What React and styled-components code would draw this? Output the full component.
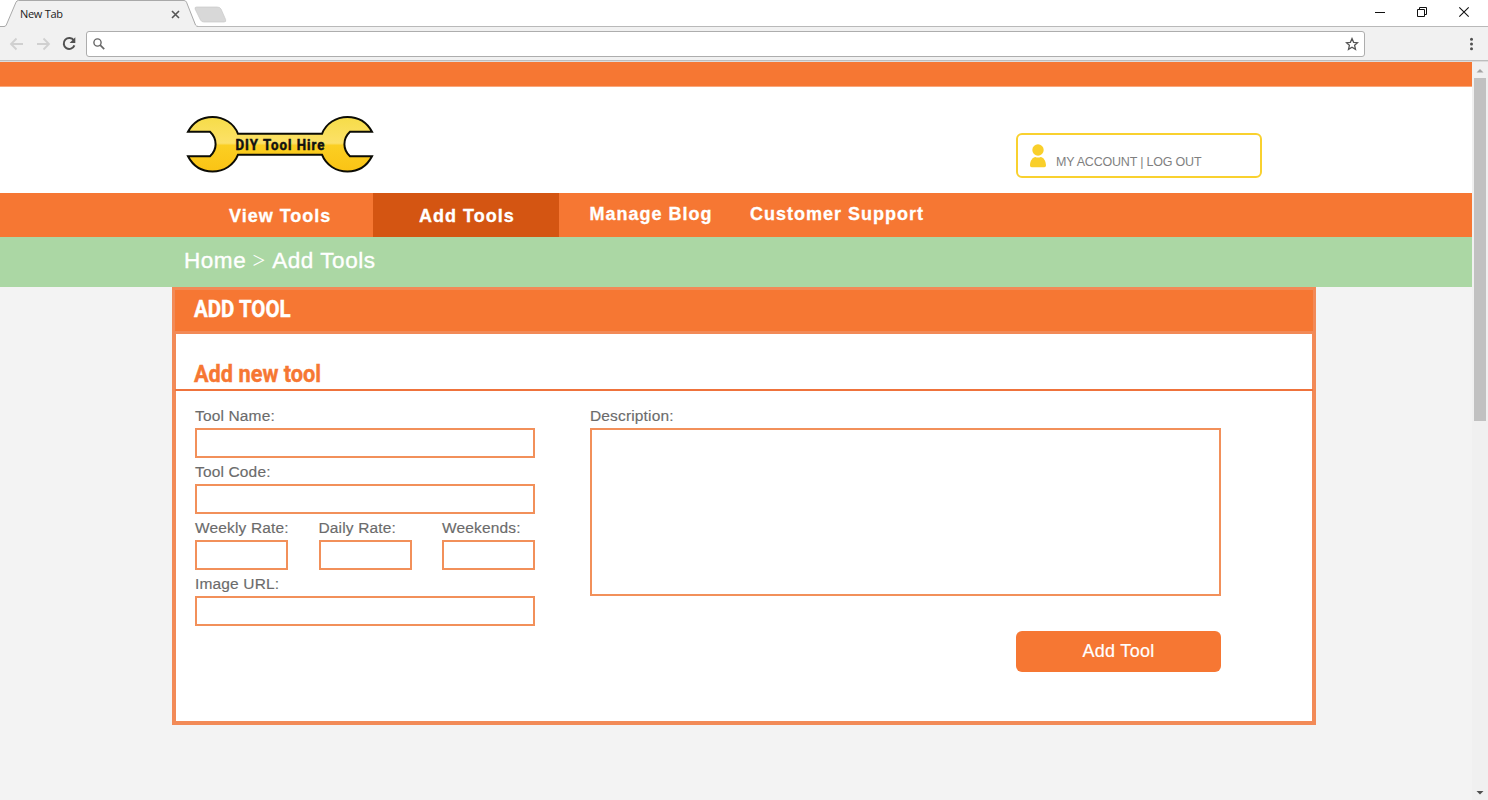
import React from 'react';
import styled, { createGlobalStyle } from 'styled-components';

const ORANGE = '#f67733';
const EDGE = '#f28a57';

const GlobalStyle = createGlobalStyle`
  * { box-sizing: border-box; }
  body { margin: 0; background: #f3f3f3; font-family: 'Liberation Sans', Arial, sans-serif; }
`;

const Window = styled.div`
  width: 1488px;
  height: 800px;
  display: flex;
  flex-direction: column;
  overflow: hidden;
`;

const TabStrip = styled.div`
  height: 27px;
  flex: none;
  display: flex;
  justify-content: space-between;
  background: #fff;
  border-bottom: 1px solid #b9b9b9;
`;

const Tabs = styled.div`
  position: relative;
  width: 240px;
  height: 27px;
  padding: 6px 0 0 20px;
  display: flex;
`;

const TabShape = styled.svg`
  position: absolute;
  left: 0;
  top: 0;
`;

const TabTitle = styled.span`
  position: relative;
  width: 151px;
  font: 11px/16px 'Open Sans', sans-serif;
  letter-spacing: -0.3px;
  color: #222;
`;

const TabClose = styled.svg`
  position: relative;
  margin-top: 4px;
`;

const WindowControls = styled.div`
  display: flex;
  padding: 6px 18px 0 0;
  gap: 30px;
`;

const Toolbar = styled.div`
  height: 35px;
  flex: none;
  display: flex;
  align-items: center;
  padding: 0 8px 1px 9px;
  background: #f1f1f1;
  border-bottom: 1px solid #dcdcdc;
  box-shadow: inset 0 -1px #bdbdbd;
`;

const NavIcons = styled.div`
  width: 77px;
  display: flex;
  gap: 10px;
`;

const AddressBar = styled.div`
  width: 1279px;
  height: 26px;
  padding: 0 5px 0 6px;
  display: flex;
  align-items: center;
  justify-content: space-between;
  background: #fff;
  border: 1px solid #adadad;
  border-radius: 3px;
`;

const MenuDots = styled.svg`
  margin-left: auto;
`;

const Viewport = styled.div`
  flex: 1;
  display: flex;
`;

const Page = styled.main`
  width: 1472px;
`;

const TopStripe = styled.div`
  height: 25px;
  background: ${ORANGE};
  border-bottom: 1px solid #f9a87c;
`;

const Header = styled.header`
  height: 106px;
  display: flex;
  justify-content: space-between;
  padding: 28px 210px 0 186px;
  background: #fff;
`;

const AccountBox = styled.div`
  width: 246px;
  height: 45px;
  margin-top: 18px;
  padding: 9px 0 0 12px;
  display: flex;
  border: 2px solid #f9d12f;
  border-radius: 6px;
`;

const AccountLinks = styled.span`
  margin: 11px 0 0 10px;
  font-size: 12.5px;
  line-height: 15px;
  letter-spacing: -0.2px;
  white-space: nowrap;
  color: #7f7f7f;
`;

const Nav = styled.nav`
  height: 44px;
  display: flex;
  padding-left: 187px;
  background: ${ORANGE};
`;

const NavItem = styled.a`
  width: ${(p) => p.$width}px;
  height: 44px;
  padding-left: ${(p) => p.$inset}px;
  background: ${(p) => (p.$active ? '#d45512' : 'transparent')};
  color: #fff;
  font-weight: bold;
  font-size: 18px;
  line-height: ${(p) => p.$line || 46}px;
  letter-spacing: 1px;
  white-space: nowrap;
  -webkit-text-stroke: 0.3px #fff;
`;

const Breadcrumb = styled.div`
  height: 50px;
  padding-left: 184px;
  background: #abd7a4;
  color: #fff;
  font-size: 22.5px;
  line-height: 47px;
  letter-spacing: 0.55px;
`;

const Crumb = styled.span`
  -webkit-text-stroke: 0.35px #fff;
`;

const Chevron = styled.span`
  display: inline-block;
  width: 26px;
  text-align: center;
  font-family: 'Liberation Serif', serif;
`;

const Panel = styled.section`
  width: 1144px;
  height: 438px;
  margin-left: 172px;
  background: #fff;
  border: 4px solid ${EDGE};
  border-top: 0;
`;

const PanelHeader = styled.h1`
  height: 47px;
  margin: 0 -1px;
  padding-left: 19px;
  background: ${ORANGE};
  border: solid ${EDGE};
  border-width: 3px 0;
  color: #fff;
  font: bold 23px/39px Roboto, sans-serif;
`;

const Squeeze = styled.span`
  display: inline-block;
  transform: scaleX(${(p) => p.$x});
  transform-origin: 0 50%;
  white-space: nowrap;
  -webkit-text-stroke: 0.4px currentColor;
  stroke-linejoin: round;
`;

const SectionTitle = styled.h2`
  height: 57px;
  margin: 0 -1px;
  padding: 28px 0 0 19px;
  border-bottom: 2px solid #ef733c;
  color: ${ORANGE};
  font: bold 23px/26px Roboto, sans-serif;
`;

const Form = styled.form`
  display: flex;
  gap: 55px;
  padding: 15px 0 0 19px;
`;

const Column = styled.div`
  width: ${(p) => p.$width}px;
  display: flex;
  flex-direction: column;
  gap: 4px;
`;

const RateRow = styled.div`
  display: flex;
  justify-content: space-between;
`;

const Field = styled.label`
  width: ${(p) => (p.$narrow ? '93px' : '100%')};
  display: flex;
  flex-direction: column;
  gap: 2px;
  color: #6b6b6b;
  font-size: 15.5px;
  line-height: 20px;
  letter-spacing: 0.15px;
  white-space: nowrap;
  -webkit-text-stroke: 0.15px #6b6b6b;
`;

const Input = styled.input`
  width: 100%;
  height: 30px;
  margin: 0;
  padding: 0 8px;
  border: 2px solid #f2905a;
  border-radius: 0;
  background: #fff;
  outline: 0;
`;

const TextArea = styled.textarea`
  width: 100%;
  height: 168px;
  margin: 0;
  border: 2px solid #f2905a;
  border-radius: 0;
  background: #fff;
  resize: none;
  outline: 0;
`;

const SubmitButton = styled.button`
  width: 205px;
  height: 41px;
  margin: 31px 0 0;
  padding: 0;
  align-self: flex-end;
  border: 0;
  border-radius: 6px;
  background: ${ORANGE};
  color: #fff;
  font: 18px/41px 'Liberation Sans', Arial, sans-serif;
  letter-spacing: 0.3px;
  -webkit-text-stroke: 0.2px #fff;
`;

const ScrollTrack = styled.div`
  width: 16px;
  display: flex;
  flex-direction: column;
  align-items: center;
  background: #f0f0f0;
`;

const ScrollArrow = styled.svg`
  flex: none;
`;

const ScrollThumb = styled.div`
  width: 12px;
  height: 343px;
  margin-bottom: auto;
  background: #c1c1c1;
`;

function Logo() {
  return (
    <svg width="188" height="59" viewBox="186 115 188 59">
      <defs>
        <linearGradient id="metal" x1="0" y1="0" x2="0" y2="1">
          <stop offset="0" stopColor="#f6dc48" />
          <stop offset="0.48" stopColor="#fce168" />
          <stop offset="0.52" stopColor="#fbcf22" />
          <stop offset="1" stopColor="#fac315" />
        </linearGradient>
      </defs>
      <path
        d="M188 131.8 C193 122.5 202 117 212.5 117 C224 117 234 123.5 238 133.8 H322 C326 123.5 336 117 347.5 117 C358 117 367 122.5 372 131.8 H350 Q344.4 137 344.4 144.2 Q344.4 151 350 156.3 H372 C367 166 358 171.5 347.5 171.5 C336 171.5 326 165 322 154.7 H238 C234 165 224 171.5 212.5 171.5 C202 171.5 193 166 188 156.3 H210 Q215.6 151 215.6 144.2 Q215.6 137 210 131.8 Z"
        fill="url(#metal)"
        stroke="#0c0c05"
        strokeWidth="2"
      />
      <g transform="translate(235.5 149.8) scale(0.88 1)">
        <text fontFamily="Roboto, sans-serif" fontWeight="bold" fontSize="15" textLength="101" fill="#111" stroke="#111" strokeWidth="0.5">
          DIY Tool Hire
        </text>
      </g>
    </svg>
  );
}

function BrowserChrome() {
  return (
    <>
      <TabStrip>
        <Tabs>
          <TabShape width="240" height="27" viewBox="0 0 240 27">
            <path d="M0 26.5 H4 Q5.5 26.5 6.3 25 L16 2.2 Q16.8 0.5 18.5 0.5 H184 Q185.7 0.5 186.5 2.2 L196 25 Q196.8 26.5 198.5 26.5 V27 H4 Z" fill="#f1f1f1" />
            <path d="M0 26.5 H4 Q5.5 26.5 6.3 25 L16 2.2 Q16.8 0.5 18.5 0.5 H184 Q185.7 0.5 186.5 2.2 L195.5 25 Q196.3 26.5 198.5 26.5" fill="none" stroke="#a9a9a9" />
            <path d="M196.5 7 H217 Q220 7 221 9 L225.6 19.5 Q226.5 22 224 22 H204 Q201.5 22 200.5 20 L195.2 9.2 Q194.4 7 196.5 7 Z" fill="#d8d8d8" stroke="#c8c8c8" strokeWidth="0.7" />
          </TabShape>
          <TabTitle>New Tab</TabTitle>
          <TabClose width="9" height="9" viewBox="0 0 9 9">
            <path d="M1 1 L8 8 M8 1 L1 8" stroke="#555" strokeWidth="1.6" />
          </TabClose>
        </Tabs>
        <WindowControls>
          <svg width="12" height="12" viewBox="0 0 12 12"><path d="M1 6.5 H11" stroke="#111" /></svg>
          <svg width="12" height="12" viewBox="0 0 12 12"><path d="M1.5 3.5 H8.5 V10.5 H1.5 Z M3.5 3.5 V1.5 H10.5 V8.5 H8.5" fill="none" stroke="#111" /></svg>
          <svg width="12" height="12" viewBox="0 0 12 12"><path d="M1.3 1.3 L10.7 10.7 M10.7 1.3 L1.3 10.7" stroke="#111" strokeWidth="1.1" /></svg>
        </WindowControls>
      </TabStrip>
      <Toolbar>
        <NavIcons>
          <svg width="16" height="16" viewBox="0 0 16 16"><path d="M14 8 H2.5 M7.5 2.5 L2 8 L7.5 13.5" fill="none" stroke="#d0d0d0" strokeWidth="1.8" /></svg>
          <svg width="16" height="16" viewBox="0 0 16 16"><path d="M2 8 H13.5 M8.5 2.5 L14 8 L8.5 13.5" fill="none" stroke="#d0d0d0" strokeWidth="1.8" /></svg>
          <svg width="16" height="16" viewBox="0 0 16 16">
            <path d="M12.8 4.3 A5.5 5.5 0 1 0 13.4 9.4" fill="none" stroke="#505050" strokeWidth="2" />
            <path d="M14.3 1.3 V7 H8.6 Z" fill="#505050" />
          </svg>
        </NavIcons>
        <AddressBar>
          <svg width="12" height="12" viewBox="0 0 12 12">
            <circle cx="4.5" cy="4.5" r="3.6" fill="none" stroke="#666" strokeWidth="1.4" />
            <path d="M7.2 7.2 L11.2 11.2" stroke="#666" strokeWidth="1.7" />
          </svg>
          <svg width="14" height="14" viewBox="0 0 14 14">
            <path d="M7 1.6 L8.6 5.3 L12.6 5.7 L9.6 8.3 L10.5 12.3 L7 10.2 L3.5 12.3 L4.4 8.3 L1.4 5.7 L5.4 5.3 Z" fill="none" stroke="#555" strokeWidth="1.3" />
          </svg>
        </AddressBar>
        <MenuDots width="16" height="14" viewBox="0 0 16 14">
          <circle cx="7.5" cy="2.3" r="1.5" fill="#505050" />
          <circle cx="7.5" cy="7" r="1.5" fill="#505050" />
          <circle cx="7.5" cy="11.7" r="1.5" fill="#505050" />
        </MenuDots>
      </Toolbar>
    </>
  );
}

function LabeledInput({ label, narrow }) {
  return (
    <Field $narrow={narrow}>
      {label}
      <Input />
    </Field>
  );
}

export default function App() {
  return (
    <Window>
      <GlobalStyle />
      <BrowserChrome />
      <Viewport>
        <Page>
          <TopStripe />
          <Header>
            <Logo />
            <AccountBox>
              <svg width="16" height="24" viewBox="0 0 16 24" fill="#f9cf2a">
                <circle cx="8" cy="6" r="5.7" />
                <path d="M0 21.5 C0 16.5 3 13 5.3 13 Q8 14.2 10.7 13 C13 13 16 16.5 16 21.5 Q16 23.2 14.3 23.2 H1.7 Q0 23.2 0 21.5 Z" />
              </svg>
              <AccountLinks>MY ACCOUNT | LOG OUT</AccountLinks>
            </AccountBox>
          </Header>
          <Nav>
            <NavItem $width={186} $inset={42}>View Tools</NavItem>
            <NavItem $width={186} $inset={46} $active>Add Tools</NavItem>
            <NavItem $width={160} $inset={30.5} $line={42}>Manage Blog</NavItem>
            <NavItem $width={210} $inset={31} $line={42}>Customer Support</NavItem>
          </Nav>
          <Breadcrumb>
            <Crumb>Home</Crumb>
            <Chevron>&gt;</Chevron>
            <Crumb>Add Tools</Crumb>
          </Breadcrumb>
          <Panel>
            <PanelHeader><Squeeze $x={0.89}>ADD TOOL</Squeeze></PanelHeader>
            <SectionTitle><Squeeze $x={0.945}>Add new tool</Squeeze></SectionTitle>
            <Form>
              <Column $width={340}>
                <LabeledInput label="Tool Name:" />
                <LabeledInput label="Tool Code:" />
                <RateRow>
                  <LabeledInput label="Weekly Rate:" narrow />
                  <LabeledInput label="Daily Rate:" narrow />
                  <LabeledInput label="Weekends:" narrow />
                </RateRow>
                <LabeledInput label="Image URL:" />
              </Column>
              <Column $width={631}>
                <Field>
                  Description:
                  <TextArea />
                </Field>
                <SubmitButton type="button">Add Tool</SubmitButton>
              </Column>
            </Form>
          </Panel>
        </Page>
        <ScrollTrack>
          <ScrollArrow width="16" height="16" viewBox="0 0 16 16"><path d="M4.5 10.5 L8 7 L11.5 10.5 Z" fill="#a3a3a3" /></ScrollArrow>
          <ScrollThumb />
          <ScrollArrow width="16" height="16" viewBox="0 0 16 16"><path d="M4.5 7 H11.5 L8 10.5 Z" fill="#505050" /></ScrollArrow>
        </ScrollTrack>
      </Viewport>
    </Window>
  );
}
